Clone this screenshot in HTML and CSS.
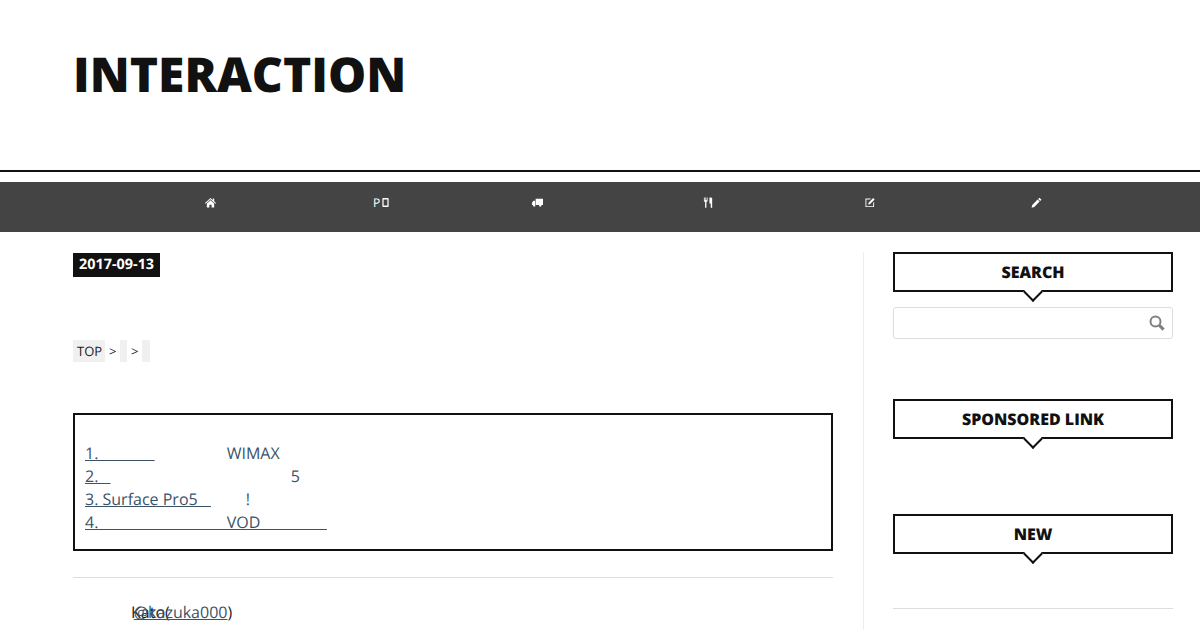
FILE: index.html
```html
<!DOCTYPE html>
<html lang="ja">
<head>
  <meta charset="UTF-8" />
  <title>INTERACTION</title>
  <link rel="stylesheet" href="styles.css">
</head>
<body>
  <header class="site-header">
    <h1 class="site-title">INTERACTION</h1>
  </header>

  <!-- Global Nav -->
  <nav class="global-nav">
    <a class="nav-item nav-home" href="#">
      <svg class="nav-icon" viewBox="0 0 12 12"><path d="M6 1 L8.6 3.4 V1.6 H10 V4.7 L12 6.6 L11.3 7.3 L6 2.5 L.7 7.3 L0 6.6 Z M2 7.2 L6 3.6 L10 7.2 V11.4 H7.2 V8.4 H4.8 V11.4 H2 Z"/></svg>
    </a>
    <a class="nav-item nav-pc" href="#">
      <span class="nav-text">P</span>
      <svg class="nav-icon nav-icon-thin" viewBox="0 0 7 10"><path d="M1 0 H6 A1 1 0 0 1 7 1 V9 A1 1 0 0 1 6 10 H1 A1 1 0 0 1 0 9 V1 A1 1 0 0 1 1 0 Z M1.4 1.6 V8.4 H5.6 V1.6 Z"/></svg>
    </a>
    <a class="nav-item nav-truck" href="#">
      <svg class="nav-icon" viewBox="0 0 12 12"><path d="M4 2 H12 V8.6 H4 Z M3.4 4 V8.6 H0 V6.4 L1.6 4 Z M2.4 8 A1.3 1.3 0 1 1 2.39 8 Z M9 8 A1.3 1.3 0 1 1 8.99 8 Z"/></svg>
    </a>
    <a class="nav-item nav-food" href="#">
      <svg class="nav-icon" viewBox="0 0 12 12"><path d="M1 .6 H1.9 V3.6 H2.6 V.6 H3.4 V3.6 H4.1 V.6 H5 V4.4 L3.7 5.6 V11.6 H2.3 V5.6 L1 4.4 Z M7.4 .6 C9 .6 10 1 10 1 V11.6 H8.4 V7 H7 V2 C7 1 7 .6 7.4 .6 Z"/></svg>
    </a>
    <a class="nav-item nav-edit" href="#">
      <svg class="nav-icon" viewBox="0 0 12 12"><path d="M1.6 1.6 H7.6 L6.6 2.6 H2.6 V10 H10 V6.4 L11 5.4 V11 H1.6 Z M10 1 L11.6 2.6 L6.4 7.8 L4.6 8.2 L5 6.2 Z"/></svg>
    </a>
    <a class="nav-item nav-pen" href="#">
      <svg class="nav-icon" viewBox="0 0 12 12"><path d="M9.2 .8 L11.4 3 L10 4.4 L7.8 2.2 Z M7.2 2.8 L9.4 5 L3.6 10.8 L.6 11.6 L1.4 8.6 Z"/></svg>
    </a>
  </nav>

  <div class="layout">
    <main class="main">
      <div class="post-date">2017-09-13</div>

      <div class="breadcrumb">
        <a class="crumb" href="#">TOP</a>
        <span class="crumb-sep">&gt;</span>
        <a class="crumb crumb-empty" href="#"></a>
        <span class="crumb-sep">&gt;</span>
        <span class="crumb crumb-empty"></span>
      </div>

      <!-- Table of contents -->
      <div class="toc">
        <div class="toc-line"><a href="#">1.&nbsp;&emsp;&emsp;&emsp;&nbsp;</a><span class="toc-plain">&emsp;&emsp;&emsp;&emsp;&ensp;WIMAX</span></div>
        <div class="toc-line"><a href="#">2.&nbsp;&ensp;</a><span class="toc-plain">&emsp;&emsp;&emsp;&emsp;&emsp;&emsp;&emsp;&emsp;&emsp;&emsp;&emsp;&nbsp;5</span></div>
        <div class="toc-line"><a href="#">3. Surface Pro5&ensp;&thinsp;&thinsp;</a><span class="toc-plain">&emsp;&emsp;&thinsp;!</span></div>
        <div class="toc-line"><a href="#">4.&nbsp;&emsp;&emsp;&emsp;&emsp;&emsp;&emsp;&emsp;&nbsp;&ensp;VOD&emsp;&emsp;&emsp;&emsp;&thinsp;</a></div>
      </div>

      <div class="author">
        <span class="author-name">Kato(</span><a href="#">@kazuka000</a>)
      </div>
    </main>

    <aside class="sidebar">
      <section class="widget widget-search">
        <h3 class="widget-title">SEARCH</h3>
        <div class="search-box">
          <svg class="search-icon" viewBox="0 0 16 16"><circle cx="6.5" cy="6.5" r="5"/><path class="search-handle" d="M10.4 10.4 L14.6 14.6"/></svg>
        </div>
      </section>
      <section class="widget widget-ad">
        <h3 class="widget-title">SPONSORED LINK</h3>
      </section>
      <section class="widget widget-new">
        <h3 class="widget-title">NEW</h3>
        <div class="new-list"></div>
      </section>
    </aside>
  </div>
</body>
</html>
```
FILE: styles.css
```css
body {
  margin: 0;
  background: #ffffff;
  color: #222222;
  font-family: "Open Sans", "Noto Sans CJK JP", sans-serif;
  font-size: 16px;
  text-rendering: geometricPrecision;
  overflow: hidden;
  height: 630px;
}

a {
  color: #3a5368;
}

.site-header {
  height: 128px;
  padding-top: 42px;
  border-bottom: 2px solid #111111;
  padding-left: 73px;
}

.site-title {
  margin: 0;
  color: #111111;
  font-size: 48px;
  font-weight: 800;
  line-height: 66px;
}

.global-nav {
  display: flex;
  height: 50px;
  margin-top: 10px;
  padding-left: 125px;
  background: #444444;
}

.nav-item {
  display: flex;
  justify-content: center;
  align-items: center;
  height: 41px;
  color: #ffffff;
  text-decoration: none;
}

.nav-home { width: 170px; }
.nav-pc { width: 172px; }
.nav-truck { width: 140px; }
.nav-food { width: 202px; }
.nav-edit { width: 120px; }
.nav-pen { width: 214px; }

.nav-icon {
  width: 11px;
  height: 11px;
  fill: #ffffff;
}

.nav-icon-thin {
  width: 7px;
  height: 9px;
  margin-left: 2px;
}

.nav-text {
  font-size: 12px;
}

.layout {
  display: flex;
  padding: 20px 27px 0 73px;
}

.main {
  width: 760px;
  padding-top: 1px;
}

.post-date {
  width: fit-content;
  height: 24px;
  padding: 0 6px;
  background: #111111;
  color: #ffffff;
  font-size: 14.4px;
  font-weight: 700;
  line-height: 24px;
}

.breadcrumb {
  display: flex;
  align-items: center;
  height: 22px;
  margin-top: 63px;
  font-size: 13px;
}

.crumb {
  display: block;
  height: 22px;
  padding: 0 3px 0 4px;
  background: #f0f0f0;
  color: #222222;
  line-height: 22px;
  text-decoration: none;
}

.crumb-empty {
  width: 7px;
  padding: 0;
}

.crumb-empty:last-child {
  width: 8px;
}

.crumb-sep {
  width: 15px;
  text-align: center;
}

.toc {
  height: 134px;
  margin-top: 51px;
  border: 2px solid #111111;
  padding-left: 10px;
  color: #3a5368;
  line-height: 23px;
}

.toc-line {
  white-space: pre;
}

.toc-line:first-child {
  margin-top: 27px;
}

.author {
  margin-top: 26px;
  padding: 23px 0 0 58px;
  border-top: 1px solid #dddddd;
  line-height: 23px;
}

.author-name {
  margin-right: -36px;
}

.sidebar {
  width: 280px;
  margin-left: 30px;
  padding-left: 29px;
  border-left: 1px solid #eeeeee;
  min-height: 400px;
}

.widget-title {
  position: relative;
  height: 36px;
  margin: 0;
  border: 2px solid #111111;
  color: #111111;
  font-size: 16px;
  font-weight: 800;
  line-height: 36px;
  text-align: center;
}

.widget-title::after {
  content: "";
  position: absolute;
  left: 50%;
  bottom: -9px;
  width: 12px;
  height: 12px;
  margin-left: -7px;
  border-right: 2px solid #111111;
  border-bottom: 2px solid #111111;
  background: #ffffff;
  transform: rotate(45deg);
}

.search-box {
  display: flex;
  justify-content: flex-end;
  align-items: center;
  height: 30px;
  margin-top: 15px;
  padding-right: 7px;
  border: 1px solid #dddddd;
  border-radius: 3px;
}

.search-icon {
  width: 16px;
  height: 16px;
  fill: none;
  stroke: #808080;
  stroke-width: 2;
}

.search-handle {
  stroke-width: 3;
}

.widget-ad {
  margin-top: 60px;
}

.widget-new {
  margin-top: 75px;
}

.new-list {
  margin-top: 54px;
  border-top: 1px solid #dddddd;
}
```
